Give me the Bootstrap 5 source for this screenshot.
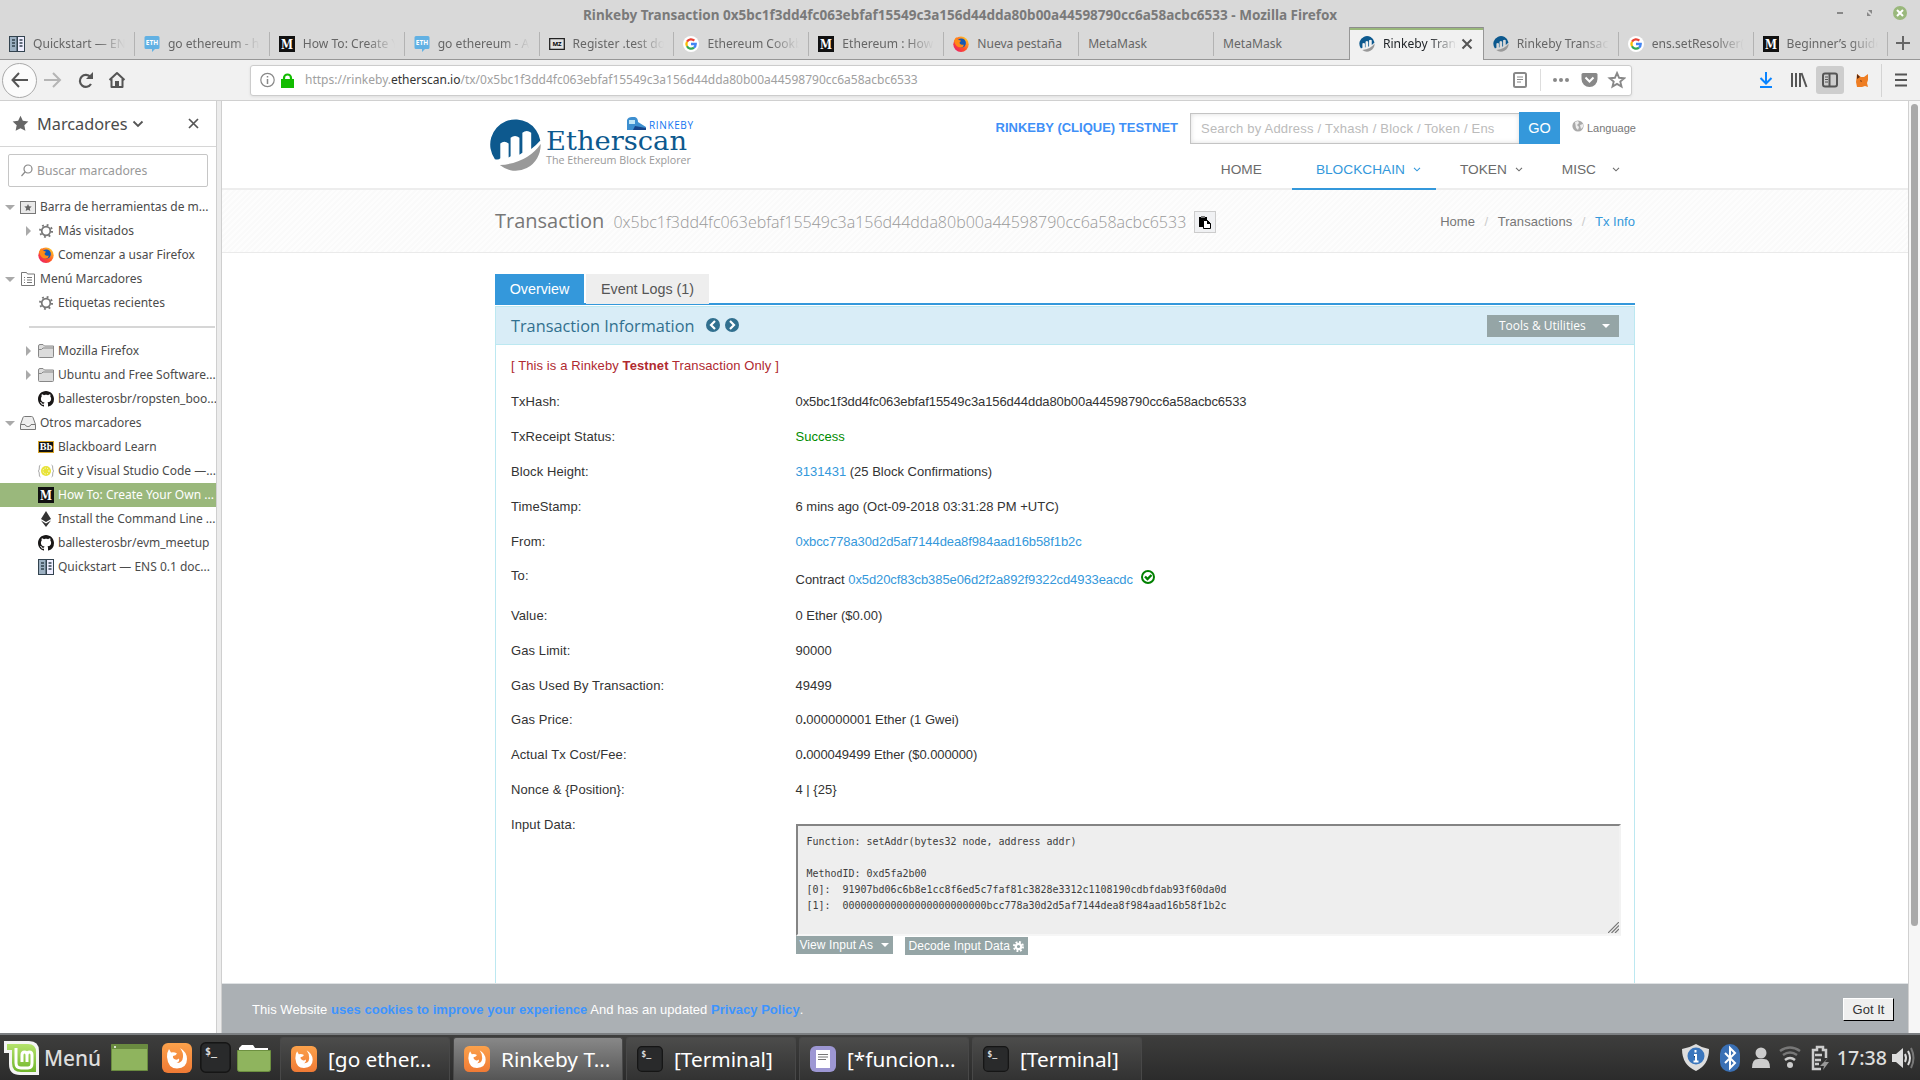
<!DOCTYPE html>
<html lang="es">
<head>
<meta charset="utf-8">
<title>Rinkeby Transaction</title>
<link href="https://cdn.jsdelivr.net/npm/bootstrap@5.3.0/dist/css/bootstrap.min.css" rel="stylesheet">
<style>
body{width:1920px;height:1080px;overflow:hidden;font-family:"Liberation Sans",Arial,sans-serif;font-size:13px;line-height:20px;color:#333;background:#fff;letter-spacing:0}
a,a:hover{text-decoration:none;color:#3498db}
svg{display:block;flex:none}
.chrome-ui{font-family:"Noto Sans",sans-serif;white-space:nowrap}
.titlebar{height:27px;background:#d9d9d9;font-weight:700;font-size:13.53px;color:#7a7a7a;line-height:30px;padding-right:12px;padding-left:583px}
.tabstrip{height:33px;background:#d9d9d9;box-shadow:inset 0 -1px #979797}
.btab{width:134.9px;height:33px;padding:0 10px 0 9px;color:#666;font-size:12.1px}
.btab .lbl{flex:1;overflow:hidden;-webkit-mask-image:linear-gradient(90deg,#000 calc(100% - 28px),transparent)}
.btab:not(.on){background:linear-gradient(#b3b3b3,#b3b3b3) right 5px/1px 24px no-repeat}
.btab.pre,.btab.pre:not(.on){background:none}
.btab.on{background:#f1f1f1;border:1px solid #979797;border-bottom:0;border-top:0;box-shadow:inset 0 1px #8d8d8d,inset 0 3px #9ab87c}
.plainlbl{padding-left:0;-webkit-mask-image:none!important}
.toolbar{height:41px;background:#f1f1f1;border-bottom:1px solid #d0d0d0;color:#666}
.urlbox{width:1382px;height:31px;background:#fff;border:1px solid #ccc;border-radius:3px;margin-left:113px;padding:0 5px 0 9px;box-shadow:0 1px 3px rgba(0,0,0,.08);color:#a0a0a0;font-size:12px}
.urlbox b{font-weight:400;color:#333}
.lockicon{margin:0 11px 0 6px}
.backbtn{width:35px;height:35px;border:1px solid #a9a9a9;border-radius:50%;background:#fbfbfb;margin-left:2px}
.midzone{height:932px}
.sidebar{width:216px;background:#fff;color:#4b4b4b}
.sidehead{height:46px;border-bottom:1px solid #d6d6d6;font-size:16.3px;padding:0 13px 0 12px}
.sidesearch{margin:7px 8px 8px 8px;height:33px;width:200px;border:1px solid #c6c6c6;border-radius:2px;color:#989898;padding-left:12px;font-size:12.2px}
.bm{height:24px;padding-left:20px;font-size:12px}
.bm.l2{padding-left:38px}
.bm.closed,.bm.open{padding-left:5px}
.bm.l2.closed{padding-left:26px}
.bm.open::before{content:"";border:5px solid transparent;border-top-color:#aaa;border-bottom:0;margin-right:5px}
.bm.closed::before{content:"";border:5px solid transparent;border-left-color:#aaa;border-right:0;margin-right:7px}
.bm svg{margin-right:4px}
.bm.sel{background:#9ab87c;color:#fff}
.bmline{height:2px;background:#d6d6d6;margin:11px 1px 11px 29px}
.splitter{width:6px;background:#ececec;border-left:1px solid #cfcfcf;border-right:1px solid #cfcfcf}
.webpage{width:1686px}
.scrollbar{width:12px;background:#f6f6f6;border-left:1px solid #d0d0d0;padding:3px 3px 0 2px}
.thumb{width:7px;height:822px;background:#a9a9a9;border-radius:4px}
.wrap{width:1140px;margin:0 auto}
.sitehead{height:89px;border-bottom:2px solid #ededed}
.sitehead .wrap{height:89px}
.sitelogo{margin:13px 0 0 -5px}
.netname{color:#3f90f7;font-weight:700;margin-right:12px;line-height:32px}
.searchbox{width:329px;height:31px;border:1px solid #c4c4c4;border-right:0;box-shadow:inset 0 0 5px #ddd;color:#bbb;line-height:30px;padding-left:10px;margin-top:1px;white-space:nowrap;letter-spacing:.21px}
.gobtn{width:41px;height:32px;background:#3498db;color:#fff;font-size:14.5px;line-height:31px;border:0;border-radius:0;padding:0}
.langsel{font-size:11px;color:#777;margin-left:12px;width:63px}
.topnav a{font-size:13.7px;color:#6b6b6b;height:46px;padding:5px 15px 0 24px;text-transform:uppercase}
.topnav a:first-child{padding-right:30px}
.topnav a.cur{color:#3498db;border-bottom:2px solid #3498db;padding-top:7px}
.crumbband{height:63px;border-bottom:1px solid #eaeaea;background:repeating-linear-gradient(135deg,#fafafa 0 2px,#fdfdfd 2px 4px)}
.crumbband h1{font:400 20px/62px "Open Sans",sans-serif;color:#777;margin:0}
.crumbband h1 span{font-size:16px;font-weight:300;color:#999;margin-left:4px}
.copybtn{width:22px;height:22px;background:#f0f1f3;border:1px solid #ccc}
.crumbband nav{color:#777;letter-spacing:.05px}.crumbband i{font-style:normal;color:#ccc;padding:0 9.5px}
.pagetabs{margin-top:21px;height:31px;border-bottom:2px solid #3498db;font-size:14.3px;line-height:30px}
.pagetabs div{height:29px}
.pagetabs .on{width:89px;background:#3498db;color:#fff;text-align:center}
.pagetabs .off{width:123px;background:#eee;color:#555;text-align:center;margin-left:2px;height:30px}
.infopanel{margin-top:1px;height:700px;border:1px solid #bce8f1}
.infohead{height:38px;background:#d9edf7;border-bottom:1px solid #bce8f1;padding:0 15px;color:#31708f;font:400 16.3px/36px "Open Sans",sans-serif}
.greybtn{background:#95a5a6;color:#fff}
.tools{width:132px;height:22px;font-size:12px;line-height:22px;padding:1px 9px 0 12px}
.warnline{color:#b02a30;padding:11px 15px 8px;letter-spacing:.1px}
.txrows{padding:0 15px}
.txrows .row{--bs-gutter-x:30px}
.txrows .col-3{letter-spacing:.09px}
.r35{height:35px;line-height:35px}
.r34{height:34px;line-height:35px}
.torow{height:39px;line-height:34px}
.torow .col-9{line-height:41px}
.okicon{margin:11px 0 0 8px}
.hexs{letter-spacing:-.09px}
.greenok{color:#008c00}
.inputrow{line-height:35px}
.inputrow .col-9{padding-top:17px}
.codebox{height:112px;border:2px solid;border-color:#848484 #f2f2f2 #f6f6f6 #848484;background:#eee;font:9.98px/16px "DejaVu Sans Mono",monospace;padding:8px 8px 8px 9px;color:#3d3d3d;margin:0;overflow:hidden;width:825px}
.grip{margin:0 0 3px -13px}
.smallbtn{height:18px;font-size:12px;line-height:18px;padding:0 4px;letter-spacing:.08px}
.viewas{width:97px}
.decode{width:123px;margin:1px 0 0 12px}
.caretd{border:4px solid transparent;border-top-color:#fff;border-bottom:0}
.cookie{height:50px;background:#abb0b4;border-top:1px solid #dfe2e4;color:#fff;margin-top:-50px;position:relative;padding:2px 14px 0 30px;letter-spacing:.035px}
.cookie b{color:#3d94ff}
.gotit{width:51px;height:23px;background:#efefef;border:1px solid #fff;border-right-color:#000;border-bottom-color:#000;color:#333;text-align:center;line-height:22px}
.taskbar{height:47px;border-top:2px solid #7c7f82;background:linear-gradient(#3e3e3d,#2b2b2b);color:#e8e8e8;font-size:20.8px;padding:0 5px 0 4px;line-height:40px}
.menutext{margin-left:5px;width:67px;font-weight:500;color:#ddd}
.clock{font-weight:500;font-size:19.6px;color:#ddd}
.task{width:170px;height:43px;margin:2px 3px 0 0;background:linear-gradient(#4c4c4b,#323232);border:1px solid #484848;border-bottom:0;border-radius:3px 3px 0 0;padding-left:10px;color:#fff}
.task.on{background:linear-gradient(#888,#555)}
.task svg{margin-right:11px}
</style>
<script src="https://cdn.jsdelivr.net/npm/bootstrap@5.3.0/dist/js/bootstrap.bundle.min.js"></script>
</head>
<body class="d-flex flex-column">
<svg width="0" height="0" class="position-absolute">
<defs>
<linearGradient id="gorange" x2="0" y2="1"><stop stop-color="#fba14b"/><stop offset="1" stop-color="#f07a35"/></linearGradient>
<linearGradient id="gff" x1="0" y1="1" x2="1" y2="0"><stop stop-color="#e5137d"/><stop offset=".45" stop-color="#ff5024"/><stop offset="1" stop-color="#ffe62b"/></linearGradient>
<linearGradient id="gmint" x2="0" y2="1"><stop stop-color="#b5e36c"/><stop offset="1" stop-color="#70b52c"/></linearGradient>
</defs>
</svg>
<svg class="d-none">
<symbol id="docs" viewBox="0 0 16 16"><path fill="#33434f" d="M0 0h16v16H0z"/><path fill="#9db1c3" d="M1 1h6.500v14H1z"/><path fill="#eef" d="M9 1h6v14H9z"/><path stroke="#33434f" stroke-width="1.500" d="M3 4h3M3 7h3M3 10h3M10.500 4h3M10.500 7h3M10.500 10h3"/></symbol>
<symbol id="eth" viewBox="0 0 16 16"><path fill="#62b1e3" d="M2 0h12q1.500 0 1.500 1.500v10q0 1.500-1.500 1.500h-3l-3 3v-3H2q-1.500 0-1.500-1.500v-10Q.5 0 2 0z"/><text x="8" y="9" font-size="6.500" font-weight="700" fill="#fff" text-anchor="middle" font-family="Noto Sans">ETH</text></symbol>
<symbol id="med" viewBox="0 0 16 16"><path fill="#111" d="M0 0h16v16H0z"/><text x="8" y="12.500" font-size="12.500" font-weight="700" fill="#fff" text-anchor="middle" font-family="DejaVu Serif" textLength="12" lengthAdjust="spacingAndGlyphs">M</text></symbol>
<symbol id="mz" viewBox="0 0 16 16"><path fill="#e2e2e2" stroke="#222" stroke-width="1.300" d="M.7 2.700h14.600v10.600H.7z"/><text x="8" y="10.300" font-size="6" font-weight="700" text-anchor="middle" font-family="Noto Sans">MZ</text></symbol>
<symbol id="goog" viewBox="0 0 16 16"><circle cx="8" cy="8" r="8" fill="#fff"/><g fill="none" stroke-width="2.300"><path stroke="#ea4335" d="M4 5.700a4.700 4.700 0 0 1 7.300-1"/><path stroke="#fbbc05" d="M4 10.200a4.700 4.700 0 0 1 0-4.500"/><path stroke="#34a853" d="M11 11.600a4.700 4.700 0 0 1-7-1.400"/><path stroke="#4285f4" d="M8 8h4.700q0 2.400-1.700 3.600"/></g></symbol>
<symbol id="ff" viewBox="0 0 16 16"><circle cx="8" cy="8.200" r="7.700" fill="url(#gff)"/><circle cx="8.400" cy="7" r="4.500" fill="#1259b5"/><path fill="#ff8a16" d="M1 5q1-3 2.500-4 0 2 2 3 2 0 2.500 1-1.500.8-1.500 2 1 2.500 4 1.500.7 2.500-2.500 3Q3 12 1 5z"/></symbol>
<symbol id="es" viewBox="0 0 52 54"><path fill="#0d598e" d="M5 41A25.700 25.700 0 1 1 51.300 22Q47 27 42 30.500V14q-4.500-3.500-9 0v20.500l-3 2V19q-4.500-3.500-9 0v19l-2 1.200V25q-4.500-3.500-8.500 0v15Q9 42 5 41z"/><path fill="#999" d="M10 47Q38 45 51.700 25.500A25.700 26.500 0 0 1 10 47z"/></symbol>
<symbol id="star" viewBox="0 0 16 16"><path d="M8 .8l2.200 4.700 5.200.6-3.800 3.600 1 5.200L8 12.400l-4.600 2.500 1-5.200L.6 6.100l5.200-.6z"/></symbol>
<symbol id="gear" viewBox="0 0 16 16"><g fill="none" stroke="#777"><circle cx="8" cy="8" r="4.300" stroke-width="1.700"/><circle cx="8" cy="8" r="6" stroke-width="2" stroke-dasharray="1.800 2.912"/></g></symbol>
<symbol id="folder" viewBox="0 0 16 14"><path fill="#dcdcdc" stroke="#888" d="M.5 12.500V2Q.5.5 2 .5h3L6.500 2h9v10.500q0 1-1 1h-13q-1 0-1-1zM.5 5.500h3L5 4h10.500"/></symbol>
<symbol id="gh" viewBox="0 0 16 16"><path fill="#191717" d="M8 0C3.580 0 0 3.580 0 8c0 3.540 2.290 6.530 5.470 7.590.4.070.55-.17.550-.38 0-.19-.01-.82-.01-1.490-2.010.37-2.530-.49-2.690-.94-.09-.23-.48-.94-.82-1.130-.28-.15-.68-.52-.01-.53.63-.01 1.080.58 1.230.82.720 1.210 1.870.87 2.330.66.070-.52.280-.87.510-1.070-1.780-.2-3.640-.89-3.640-3.950 0-.87.310-1.590.82-2.150-.08-.2-.36-1.020.08-2.120 0 0 .67-.21 2.200.82.640-.18 1.320-.27 2-.27s1.360.09 2 .27c1.530-1.040 2.200-.82 2.200-.82.440 1.100.16 1.920.08 2.120.51.560.82 1.270.82 2.150 0 3.070-1.870 3.750-3.650 3.950.290.25.540.73.540 1.480 0 1.070-.01 1.930-.01 2.200 0 .21.150.46.550.38A8 8 0 0 0 16 8c0-4.420-3.580-8-8-8z"/></symbol>
<symbol id="mintff" viewBox="0 0 30 30"><rect width="30" height="30" rx="6" fill="url(#gorange)"/><path fill="#fff" d="M5 14q0-5 2-8l2 3.500q3-1 6 1-1 2-4 2.500-.5 2.500 2.500 3.500 2 .5 3.500-1 1 3-2.500 4.500 6 0 6.500-6 .5-4.500-3-9 7 4 7 11 0 9-10 9.500Q6 25.500 5 14z"/></symbol>
<symbol id="term" viewBox="0 0 31 31"><rect x=".8" y=".8" width="29.400" height="29.400" rx="5" fill="#292a2b" stroke="#151515" stroke-width="1.500"/><text x="5" y="13" font-size="10" font-weight="700" font-family="DejaVu Sans Mono" fill="#ddd">$_</text></symbol>
<symbol id="chev" viewBox="0 0 8 5"><path d="M1 .8l3 3 3-3" fill="none" stroke="currentColor" stroke-width="1.100"/></symbol>
</svg>

<div class="chrome-ui titlebar d-flex align-items-start"><span>Rinkeby Transaction 0x5bc1f3dd4fc063ebfaf15549c3a156d44dda80b00a44598790cc6a58acbc6533 - Mozilla Firefox</span>
<svg class="ms-auto" width="73" height="27"><path stroke="#888" stroke-width="2" d="M2 13h6"/><path fill="#888" d="M33 10h4v4zM32 12v4h4z"/><circle cx="65" cy="13" r="7" fill="#9ab87c"/><path stroke="#fff" stroke-width="2" d="M62 10l6 6m0-6l-6 6"/></svg></div>

<div class="chrome-ui tabstrip d-flex">
<div class="btab d-flex align-items-center gap-1"><svg class="me-1" width="16" height="16"><use href="#docs"/></svg><span class="lbl">Quickstart — ENS 0.1</span></div>
<div class="btab d-flex align-items-center gap-1"><svg class="me-1" width="16" height="16"><use href="#eth"/></svg><span class="lbl">go ethereum - how to</span></div>
<div class="btab d-flex align-items-center gap-1"><svg class="me-1" width="16" height="16"><use href="#med"/></svg><span class="lbl">How To: Create Your</span></div>
<div class="btab d-flex align-items-center gap-1"><svg class="me-1" width="16" height="16"><use href="#eth"/></svg><span class="lbl">go ethereum - Acc</span></div>
<div class="btab d-flex align-items-center gap-1"><svg class="me-1" width="16" height="16"><use href="#mz"/></svg><span class="lbl">Register .test domain</span></div>
<div class="btab d-flex align-items-center gap-1"><svg class="me-1" width="16" height="16"><use href="#goog"/></svg><span class="lbl">Ethereum Cookbook</span></div>
<div class="btab d-flex align-items-center gap-1"><svg class="me-1" width="16" height="16"><use href="#med"/></svg><span class="lbl">Ethereum : How to</span></div>
<div class="btab d-flex align-items-center gap-1"><svg class="me-1" width="16" height="16"><use href="#ff"/></svg><span class="lbl plainlbl">Nueva pestaña</span></div>
<div class="btab d-flex align-items-center"><span class="lbl plainlbl">MetaMask</span></div>
<div class="btab pre d-flex align-items-center"><span class="lbl plainlbl">MetaMask</span></div>
<div class="btab on d-flex align-items-center gap-1 text-dark"><svg class="me-1" width="16" height="16"><use href="#es"/></svg><span class="lbl">Rinkeby Transac</span><svg width="12" height="12"><path d="M1.500 1.500l9 9m0-9l-9 9" stroke="#555" stroke-width="2"/></svg></div>
<div class="btab d-flex align-items-center gap-1"><svg class="me-1" width="16" height="16"><use href="#es"/></svg><span class="lbl">Rinkeby Transaction</span></div>
<div class="btab d-flex align-items-center gap-1"><svg class="me-1" width="16" height="16"><use href="#goog"/></svg><span class="lbl">ens.setResolver(en</span></div>
<div class="btab d-flex align-items-center gap-1"><svg class="me-1" width="16" height="16"><use href="#med"/></svg><span class="lbl">Beginner’s guide to</span></div>
<svg width="30" height="33"><path d="M15 9v14M8 16h14" stroke="#666" stroke-width="2"/></svg>
</div>

<div class="chrome-ui toolbar d-flex align-items-center">
<div class="backbtn d-flex align-items-center justify-content-center"><svg width="18" height="16" fill="none" stroke="#555" stroke-width="2"><path d="M8 1L1.500 8 8 15M2 8h15"/></svg></div>
<svg width="96" height="40" class="ms-1" fill="none"><path stroke="#b5b5b5" stroke-width="2" d="M12 13l7 7-7 7M3 20h16"/><g stroke="#555" stroke-width="2.200"><path d="M50 24a6 6 0 1 1-.5-7"/></g><path fill="#555" d="M45 19h7v-7z"/><path stroke="#555" stroke-width="2" stroke-linejoin="round" d="M68.500 20l7.500-7 7.500 7M70.500 19v8h11v-8"/><path fill="#555" d="M74 21h4v6h-4z"/></svg>
<div class="urlbox d-flex align-items-center">
<svg width="15" height="16" fill="none" stroke="#888"><circle cx="7.500" cy="8" r="6.700" stroke-width="1.200"/><path stroke-width="1.500" d="M7.500 7v5M7.500 4v1.500"/></svg>
<svg width="13" height="15" class="lockicon"><path fill="#12bc00" d="M0 6h13v9H0z"/><path fill="none" stroke="#12bc00" stroke-width="2.200" d="M3 7V5a3.500 3.500 0 0 1 7 0v2"/></svg>
<span>https://rinkeby.<b>etherscan.io</b>/tx/0x5bc1f3dd4fc063ebfaf15549c3a156d44dda80b00a44598790cc6a58acbc6533</span>
<svg class="ms-auto" width="118" height="30" fill="none" stroke="#888"><rect x="6" y="8" width="12" height="14" rx="1.500" stroke-width="2"/><path d="M9 12h6M9 14.500h6M9 17h4"/><path stroke="#ddd" d="M32.500 4v22"/><g fill="#888" stroke="none"><circle cx="47" cy="15" r="2"/><circle cx="53" cy="15" r="2"/><circle cx="59" cy="15" r="2"/><path d="M75 8h13q1.500 0 1.500 1.500V14a8 8 0 0 1-16 0V9.500Q73.500 8 75 8z"/></g><path d="M77.500 12.500l4 4 4-4" stroke="#fff" stroke-width="2"/><path stroke-width="1.900" d="M109 8l2.100 4.800 5.200.4-4 3.400 1.200 5-4.500-2.700-4.500 2.700 1.200-5-4-3.400 5.200-.4z"/></svg>
</div>
<svg width="180" height="40" class="ms-auto" fill="none" stroke="#555" stroke-width="2"><path stroke="#0a84ff" d="M26 12v11M20.500 18l5.500 5.500 5.500-5.500M20 27h12"/><path d="M52 13v14M56 13v14M60 13v14M61.500 13l5 14"/><rect x="76" y="6" width="28" height="28" rx="3" fill="#cdcdcd" stroke="none"/><rect x="83" y="13.500" width="14" height="13" rx="2"/><path d="M89.500 14v12"/><path stroke-width="1" d="M85 17h3M85 19.500h3M85 22h3"/><g stroke="none"><path fill="#ee7d22" d="M117 14l4 3h3l4-3 0 6-1 3 1 4-3-1-3 1-5 0-1-5z"/><path fill="#5b2a10" d="M117 14l3 3-3 2zM120 20l2 1-1 1z"/></g><path stroke="#d4d4d4" stroke-width="1" d="M141.500 4v33"/><path d="M155 14.500h12M155 20h12M155 25.500h12"/></svg>
</div>

<div class="midzone d-flex">
<aside class="sidebar chrome-ui">
<div class="sidehead d-flex align-items-center"><svg width="17" height="17" fill="#666" class="me-2"><use href="#star"/></svg>Marcadores<svg width="12" height="8" class="ms-1"><path d="M1.500 1.500l4.500 4.500 4.500-4.500" fill="none" stroke="#555" stroke-width="1.800"/></svg><svg class="ms-auto me-1" width="11" height="11"><path d="M1 1l9 9m0-9l-9 9" stroke="#555" stroke-width="1.700"/></svg></div>
<div class="sidesearch d-flex align-items-center"><svg width="12" height="13" class="me-1" fill="none" stroke="#888" stroke-width="1.200"><circle cx="7" cy="5" r="4"/><path d="M4 8l-3.500 4"/></svg>Buscar marcadores</div>
<div class="bm open d-flex align-items-center"><svg width="16" height="13"><rect x=".5" y=".5" width="15" height="12" fill="#e9e9e9" stroke="#777"/><g transform="translate(4 2.500) scale(.5)" fill="#666"><use href="#star" width="16" height="16"/></g></svg>Barra de herramientas de m...</div>
<div class="bm l2 closed d-flex align-items-center"><svg width="16" height="16"><use href="#gear"/></svg>Más visitados</div>
<div class="bm l2 d-flex align-items-center"><svg width="16" height="16"><use href="#ff"/></svg>Comenzar a usar Firefox</div>
<div class="bm open d-flex align-items-center"><svg width="16" height="14" fill="none" stroke="#777"><path d="M1.500 13.500V.5h5l1 1.500h7v11.500zM4 5.500h1M7 5.500h5M4 8h1M7 8h5M4 10.500h1M7 10.500h5"/></svg>Menú Marcadores</div>
<div class="bm l2 d-flex align-items-center"><svg width="16" height="16"><use href="#gear"/></svg>Etiquetas recientes</div>
<div class="bmline"></div>
<div class="bm l2 closed d-flex align-items-center"><svg width="16" height="14"><use href="#folder"/></svg>Mozilla Firefox</div>
<div class="bm l2 closed d-flex align-items-center"><svg width="16" height="14"><use href="#folder"/></svg>Ubuntu and Free Software...</div>
<div class="bm l2 d-flex align-items-center"><svg width="16" height="16"><use href="#gh"/></svg>ballesterosbr/ropsten_boo...</div>
<div class="bm open d-flex align-items-center"><svg width="16" height="14"><path fill="#eee" stroke="#777" d="M.5 8.500L3 1.500Q3.300.5 4.500.5h7q1.200 0 1.500 1l2.500 7v5H.5zM.5 8.500h4.500q.5 2 3 2t3-2h4.500"/></svg>Otros marcadores</div>
<div class="bm l2 d-flex align-items-center"><svg width="16" height="12"><rect x=".5" y=".5" width="15" height="11" fill="#111" stroke="#d9a62b"/><text x="8" y="9" font-size="8.500" font-weight="700" fill="#fff" text-anchor="middle" font-family="DejaVu Serif">Bb</text></svg>Blackboard Learn</div>
<div class="bm l2 d-flex align-items-center"><svg width="16" height="14"><circle cx="8" cy="7" r="5" fill="#e8e337"/><circle cx="8" cy="7" r="3" fill="none" stroke="#fff" stroke-dasharray="1 1.500"/><path fill="none" stroke="#aaa" d="M2.500 1q-1.500 0-1.200 3 0 2.500-1 3 1 .5 1 3-.3 3 1.200 3M13.500 1q1.500 0 1.200 3 0 2.500 1 3-1 .5-1 3 .3 3-1.200 3"/></svg>Git y Visual Studio Code —...</div>
<div class="bm l2 sel d-flex align-items-center"><svg width="16" height="16"><use href="#med"/></svg>How To: Create Your Own ...</div>
<div class="bm l2 d-flex align-items-center"><svg width="16" height="16"><path fill="#333" d="M8 0l5 8-5 3-5-3zM3 9.500l5 3 5-3L8 16z"/></svg>Install the Command Line ...</div>
<div class="bm l2 d-flex align-items-center"><svg width="16" height="16"><use href="#gh"/></svg>ballesterosbr/evm_meetup</div>
<div class="bm l2 d-flex align-items-center"><svg width="16" height="16"><use href="#docs"/></svg>Quickstart — ENS 0.1 doc...</div>
</aside>
<div class="splitter"></div>

<main class="webpage overflow-hidden d-flex flex-column">
<div class="h-100 flex-shrink-0 overflow-hidden">
<header class="sitehead"><div class="wrap d-flex justify-content-between">
<svg class="sitelogo" width="210" height="62"><use href="#es" y="4.500" width="51" height="54"/><text x="56" y="36" font-family="DejaVu Serif" font-size="26" fill="#0d598e" textLength="141" lengthAdjust="spacingAndGlyphs">Etherscan</text><text x="56" y="50" font-family="Open Sans" font-size="11.500" fill="#999" textLength="145" lengthAdjust="spacingAndGlyphs">The Ethereum Block Explorer</text><text x="159" y="15" font-family="Open Sans" font-size="10" fill="#0f74f0" textLength="44">RINKEBY</text><path fill="#3d8fd0" d="M137 16V6q1-3 5-3h3q3 1 3 5l8 5v3z"/><path fill="#bfe6f8" d="M139 6h6v4h-6z"/><path fill="#17458c" d="M145 12l11 2v2h-13z"/></svg>
<div>
<div class="d-flex justify-content-end" style="padding-top:11px">
<span class="netname">RINKEBY (CLIQUE) TESTNET</span><div class="searchbox">Search by Address / Txhash / Block / Token / Ens</div><button class="gobtn">GO</button>
<span class="langsel d-flex align-items-center"><svg width="12" height="12" class="me-1 mb-1"><circle cx="6" cy="6" r="5.600" fill="#aaa"/><path fill="#eee" d="M3 2l3-1 1 2-2 2 2 2-1 3-2-2zM8 5l3-1v3l-2 2z"/></svg><span style="margin-left:-1px">Language</span></span>
</div>
<nav class="topnav d-flex justify-content-end">
<a href="#" class="d-flex align-items-center">Home</a>
<a href="#" class="cur d-flex align-items-center">Blockchain<svg width="8" height="5" class="ms-2"><use href="#chev"/></svg></a>
<a href="#" class="d-flex align-items-center">Token<svg width="8" height="5" class="ms-2"><use href="#chev"/></svg></a>
<a href="#" class="d-flex align-items-center">Misc<svg width="8" height="5" class="ms-3"><use href="#chev"/></svg></a>
</nav></div>
</div></header>
<div class="crumbband"><div class="wrap d-flex align-items-center">
<h1>Transaction <span>0x5bc1f3dd4fc063ebfaf15549c3a156d44dda80b00a44598790cc6a58acbc6533</span></h1>
<div class="copybtn ms-2"><svg width="20" height="20"><path d="M4 5h8v10H4z"/><path fill="#777" d="M6 4h4v2H6z"/><path fill="#fff" stroke="#000" d="M8.500 8.500h4l3 3v5h-7z"/><path d="M12 8v4h4z"/></svg></div>
<nav class="ms-auto">Home<i>/</i>Transactions<i>/</i><a href="#">Tx Info</a></nav>
</div></div>
<section class="wrap">
<div class="pagetabs d-flex"><div class="on">Overview</div><div class="off">Event Logs (1)</div></div>
<div class="infopanel">
<div class="infohead d-flex align-items-center"><span>Transaction Information</span>
<svg width="34" height="14" style="margin:-2px 0 0 12px"><g fill="#31708f"><circle cx="7" cy="7" r="7"/><circle cx="26" cy="7" r="7"/></g><path fill="none" stroke="#fff" stroke-width="2.200" d="M9 3L5 7l4 4M24 3l4 4-4 4"/></svg>
<div class="greybtn tools ms-auto d-flex align-items-center justify-content-between">Tools &amp; Utilities<span class="caretd"></span></div></div>
<div class="warnline">[ This is a Rinkeby <b>Testnet</b> Transaction Only ]</div>
<div class="txrows">
<div class="row r35"><div class="col-3">TxHash:</div><div class="col-9 hexs">0x5bc1f3dd4fc063ebfaf15549c3a156d44dda80b00a44598790cc6a58acbc6533</div></div>
<div class="row r35"><div class="col-3">TxReceipt Status:</div><div class="col-9 greenok">Success</div></div>
<div class="row r35"><div class="col-3">Block Height:</div><div class="col-9"><a href="#">3131431</a> (25 Block Confirmations)</div></div>
<div class="row r35"><div class="col-3">TimeStamp:</div><div class="col-9">6 mins ago (Oct-09-2018 03:31:28 PM +UTC)</div></div>
<div class="row r35"><div class="col-3">From:</div><div class="col-9 hexs"><a href="#">0xbcc778a30d2d5af7144dea8f984aad16b58f1b2c</a></div></div>
<div class="row torow"><div class="col-3">To:</div><div class="col-9 d-flex">Contract&nbsp;<a href="#" class="hexs">0x5d20cf83cb385e06d2f2a892f9322cd4933eacdc</a><svg class="okicon" width="14" height="14" fill="none" stroke="#008000" stroke-width="2"><circle cx="7" cy="7" r="6"/><path stroke-width="2.400" d="M4 6.500l2.500 2.500L10.500 5"/></svg></div></div>
<div class="row r35"><div class="col-3">Value:</div><div class="col-9">0 Ether ($0.00)</div></div>
<div class="row r35"><div class="col-3">Gas Limit:</div><div class="col-9">90000</div></div>
<div class="row r34"><div class="col-3">Gas Used By Transaction:</div><div class="col-9">49499</div></div>
<div class="row r35"><div class="col-3">Gas Price:</div><div class="col-9">0<b>.</b>000000001 Ether (1 Gwei)</div></div>
<div class="row r35"><div class="col-3">Actual Tx Cost/Fee:</div><div class="col-9 hexs">0<b>.</b>000049499 Ether ($0.000000)</div></div>
<div class="row r35"><div class="col-3">Nonce &amp; {Position}:</div><div class="col-9">4 | {25}</div></div>
<div class="row inputrow"><div class="col-3">Input Data:</div><div class="col-9">
<div class="d-flex align-items-end"><pre class="codebox">Function: setAddr(bytes32 node, address addr)

MethodID: 0xd5fa2b00
[0]:  91907bd06c6b8e1cc8f6ed5c7faf81c3828e3312c1108190cdbfdab93f60da0d
[1]:  000000000000000000000000bcc778a30d2d5af7144dea8f984aad16b58f1b2c</pre><svg class="grip" width="11" height="11" stroke="#777" stroke-width="1.200"><path d="M0 11L11 0M3.500 11L11 3.500M7 11l4-4"/></svg></div>
<div class="d-flex"><div class="greybtn smallbtn viewas d-flex align-items-center justify-content-between">View Input As<span class="caretd"></span></div>
<div class="greybtn smallbtn decode d-flex align-items-center justify-content-between">Decode Input Data<svg width="11" height="11" fill="none" stroke="#fff"><circle cx="5.500" cy="5.500" r="2.700" stroke-width="2.200"/><circle cx="5.500" cy="5.500" r="4.500" stroke-width="2" stroke-dasharray="1.900 1.634"/></svg></div></div>
</div></div>
</div>
</div>
</section>
</div>
<div class="cookie d-flex align-items-center justify-content-between flex-shrink-0"><span>This Website <b>uses cookies to improve your experience</b> And has an updated <b>Privacy Policy</b>.</span><div class="gotit">Got It</div></div>
</main>
<div class="scrollbar"><div class="thumb"></div></div>
</div>

<footer class="taskbar chrome-ui d-flex align-items-center">
<svg width="35" height="36"><path fill="#f4f4f4" d="M0 1h25q10 0 10 10v24H16Q5 35 5 24V13H0z"/><path fill="url(#gmint)" d="M3 4h21q8 0 8 8v20H17Q8 32 8 23V10H3z"/><path fill="none" stroke="#fff" stroke-width="3" d="M12 8v15q0 5 5 5h7q4 0 4-5v-8q0-3-2.500-3T23 15v7m0-7q0-3-2.500-3T18 15v7"/></svg>
<span class="menutext">Menú</span>
<svg width="37" height="27" style="margin-right:14px"><path fill="#8fb45e" stroke="#6a8b40" d="M.5.5h36v26H.5z"/><path fill="#6a8b40" d="M1 1h35v4H1z"/><circle cx="4" cy="3" r="1" fill="#fff"/></svg>
<svg width="30" height="30" class="me-2"><use href="#mintff"/></svg>
<svg width="31" height="31" style="margin-right:6px"><use href="#term"/></svg>
<svg width="34" height="28" style="margin-right:9px"><path fill="#fff" d="M2 8V4l3-3h11l2 3h13v5z"/><path fill="#8fb45e" stroke="#6d9040" d="M.5 6.500h33v19q0 2-2 2h-29q-2 0-2-2z"/></svg>
<div class="task d-flex align-items-center"><svg width="26" height="26"><use href="#mintff"/></svg>[go ether...</div>
<div class="task on d-flex align-items-center"><svg width="26" height="26"><use href="#mintff"/></svg>Rinkeby T...</div>
<div class="task d-flex align-items-center"><svg width="26" height="26"><use href="#term"/></svg>[Terminal]</div>
<div class="task d-flex align-items-center"><svg width="26" height="26"><rect width="26" height="26" rx="6" fill="#9d97d3"/><path fill="#fff" d="M6 4h14v18H6z"/><path stroke="#777" d="M8 8.500h10M8 11h10M8 13.500h8"/></svg>[*funcion...</div>
<div class="task d-flex align-items-center"><svg width="26" height="26"><use href="#term"/></svg>[Terminal]</div>
<svg class="ms-auto me-2" width="148" height="40"><path fill="#ddd" d="M15 6q6 4 13 5 0 16-13 22Q1 27 1 11q7-1 14-5z"/><circle cx="15" cy="18" r="8.500" fill="#3a76bd"/><path stroke="#fff" stroke-width="2" d="M13 17h2v6M12.500 23.500h5M14.500 12v2.500"/><rect x="39" y="6" width="20" height="28" rx="10" fill="#3a70b5"/><path fill="none" stroke="#fff" stroke-width="2" d="M44 15l10 10-5 5V10l5 5-10 10"/><g fill="#ccc"><circle cx="80" cy="15" r="5.500"/><path d="M71 30q0-9 6-9h6q6 0 6 9z"/><circle cx="109" cy="27" r="3"/></g><g fill="none" stroke-width="2.500"><path stroke="#ccc" d="M104 22q5-4 10 0"/><path stroke="#777" d="M102 17q7-5 14 0M99 13q10-7 20 0"/><path stroke="#ccc" d="M145 20v-8h-3V9h-6v3h-4v19h8"/><path stroke="#ccc" d="M134 17h7M134 22h6M134 26h4"/></g><path fill="#999" d="M147 20l-8 8h4l-1 4 6-8h-4z"/></svg>
<span class="clock">17:38</span>
<svg width="23" height="24" style="margin-left:5px"><path fill="#ddd" d="M0 8h4l7-6v20l-7-6H0z"/><g fill="none" stroke-width="2"><path stroke="#ddd" d="M13 8q2 4 0 8M16 5q4 7 0 14"/><path stroke="#777" d="M19 2q5 10 0 20"/></g></svg>
</footer>
</body>
</html>
